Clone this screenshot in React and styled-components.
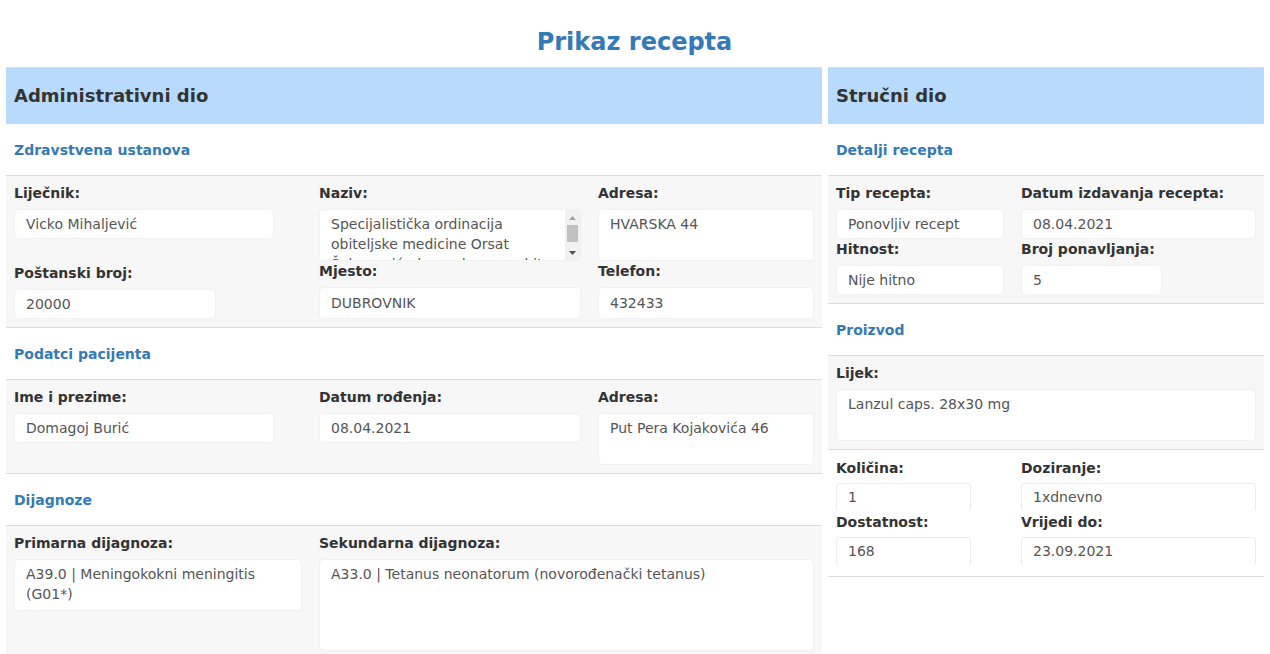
import React from "react";
import styled, { createGlobalStyle } from "styled-components";

const GlobalStyle = createGlobalStyle`
  html, body { margin: 0; padding: 0; background: #fff; }
  body { font-family: "DejaVu Sans", Verdana, sans-serif; color: #333; }
  * { box-sizing: border-box; }
`;

const Page = styled.div`
  padding: 0 7px 0 6px;
`;

const Title = styled.h1`
  margin: 0;
  padding: 27px 0 10px;
  line-height: 30px;
  font-size: 24px;
  font-weight: bold;
  color: #337ab7;
  text-align: center;
`;

const Columns = styled.div`
  display: grid;
  grid-template-columns: 816px 436px;
  column-gap: 6px;
  align-items: start;
`;

const Panel = styled.section`
  display: flex;
  flex-direction: column;
`;

const PanelHeader = styled.h2`
  margin: 0;
  height: 57px;
  display: flex;
  align-items: center;
  padding: 0 8px 1px;
  background: #b8dafd;
  border-top: 1px solid #c8e2fc;
  font-size: 18px;
  font-weight: bold;
  color: #333;
`;

const SectionTitle = styled.h3`
  margin: 0;
  height: 52px;
  display: flex;
  align-items: center;
  padding: 1px 8px 0;
  border-bottom: 1px solid #dddddd;
  font-size: 14px;
  font-weight: bold;
  color: #337ab7;
  background: #fff;
`;

const SectionBody = styled.div`
  background: ${(p) => (p.$white ? "#fff" : "#f7f7f7")};
  padding: ${(p) => p.$pad || "7px 8px 8px"};
  border-bottom: 1px solid #dddddd;
`;

const FieldGrid = styled.div`
  display: grid;
  grid-template-columns: ${(p) => p.$cols};
  column-gap: 17px;
  row-gap: 0;
  align-items: start;
`;

const Field = styled.div`
  display: flex;
  flex-direction: column;
  grid-column: ${(p) => p.$span || "auto"};
  margin-top: ${(p) => p.$top || 0}px;
`;

const Label = styled.label`
  font-size: 14px;
  font-weight: bold;
  line-height: 20px;
  color: #333;
  margin-bottom: ${(p) => p.$gap || 6}px;
`;

const Box = styled.div`
  width: ${(p) => (p.$w ? `${p.$w}px` : "100%")};
  height: ${(p) => p.$h || 30}px;
  background: #fff;
  border: 1px solid ${(p) => (p.$open ? "#ececec" : "#f1f1f1")};
  border-bottom: ${(p) => (p.$open ? "0" : "1px solid #f1f1f1")};
  border-radius: 4px;
  padding: ${(p) => (p.$multi ? "4px 11px" : "0 11px")};
  font-size: 14px;
  line-height: ${(p) => (p.$multi ? "20px" : `${(p.$h || 30) - 2}px`)};
  color: #555;
  overflow: hidden;
`;

const ScrollBox = styled.div`
  display: flex;
  height: 52px;
  background: #fff;
  border: 1px solid #f1f1f1;
  border-radius: 4px;
  overflow: hidden;
`;

const ScrollText = styled.div`
  flex: 1;
  padding: 4px 11px;
  font-size: 14px;
  line-height: 20px;
  color: #555;
  overflow: hidden;
`;

const ScrollBar = styled.div`
  width: 15px;
  display: flex;
  flex-direction: column;
  background: #f1f1f1;
`;

const ScrollButton = styled.div`
  height: 15px;
  display: flex;
  align-items: center;
  justify-content: center;
`;

const ScrollTrack = styled.div`
  flex: 1;
  padding: 0 2px;
`;

const ScrollThumb = styled.div`
  height: 17px;
  background: #c1c1c1;
`;

const Arrow = ({ down, color }) => (
  <svg width="7" height="4" viewBox="0 0 7 4">
    {down ? (
      <polygon points="0,0 7,0 3.5,4" fill={color} />
    ) : (
      <polygon points="0,4 7,4 3.5,0" fill={color} />
    )}
  </svg>
);

const F = ({ label, children, span, gap, top }) => (
  <Field $span={span} $top={top}>
    <Label $gap={gap}>{label}</Label>
    {children}
  </Field>
);

export default function App() {
  return (
    <>
      <GlobalStyle />
      <Page>
        <Title>Prikaz recepta</Title>
        <Columns>
          <Panel>
            <PanelHeader>Administrativni dio</PanelHeader>
            <SectionTitle>Zdravstvena ustanova</SectionTitle>
            <SectionBody>
              <FieldGrid $cols="288px 262px 1fr">
                <F label="Liječnik:">
                  <Box $w={260}>Vicko Mihaljević</Box>
                </F>
                <F label="Naziv:">
                  <ScrollBox>
                    <ScrollText>
                      Specijalistička ordinacija obiteljske medicine Orsat
                      Šabanović, dr. med. spec. obit. med.
                    </ScrollText>
                    <ScrollBar>
                      <ScrollButton>
                        <Arrow color="#a3a3a3" />
                      </ScrollButton>
                      <ScrollTrack>
                        <ScrollThumb />
                      </ScrollTrack>
                      <ScrollButton>
                        <Arrow down color="#505050" />
                      </ScrollButton>
                    </ScrollBar>
                  </ScrollBox>
                </F>
                <F label="Adresa:">
                  <Box $h={52} $multi>HVARSKA 44</Box>
                </F>
                <F label="Poštanski broj:" top={2}>
                  <Box $w={202}>20000</Box>
                </F>
                <F label="Mjesto:">
                  <Box $h={32}>DUBROVNIK</Box>
                </F>
                <F label="Telefon:">
                  <Box $h={32}>432433</Box>
                </F>
              </FieldGrid>
            </SectionBody>
            <SectionTitle>Podatci pacijenta</SectionTitle>
            <SectionBody>
              <FieldGrid $cols="288px 262px 1fr">
                <F label="Ime i prezime:">
                  <Box $w={260}>Domagoj Burić</Box>
                </F>
                <F label="Datum rođenja:">
                  <Box>08.04.2021</Box>
                </F>
                <F label="Adresa:">
                  <Box $h={52} $multi>Put Pera Kojakovića 46</Box>
                </F>
              </FieldGrid>
            </SectionBody>
            <SectionTitle>Dijagnoze</SectionTitle>
            <SectionBody>
              <FieldGrid $cols="288px 262px 1fr">
                <F label="Primarna dijagnoza:">
                  <Box $h={52} $multi>A39.0 | Meningokokni meningitis (G01*)</Box>
                </F>
                <F label="Sekundarna dijagnoza:" span="2 / 4">
                  <Box $h={92} $multi>A33.0 | Tetanus neonatorum (novorođenački tetanus)</Box>
                </F>
              </FieldGrid>
            </SectionBody>
          </Panel>

          <Panel>
            <PanelHeader>Stručni dio</PanelHeader>
            <SectionTitle>Detalji recepta</SectionTitle>
            <SectionBody>
              <FieldGrid $cols="168px 1fr">
                <F label="Tip recepta:">
                  <Box>Ponovljiv recept</Box>
                </F>
                <F label="Datum izdavanja recepta:">
                  <Box>08.04.2021</Box>
                </F>
                <F label="Hitnost:">
                  <Box>Nije hitno</Box>
                </F>
                <F label="Broj ponavljanja:">
                  <Box $w={141}>5</Box>
                </F>
              </FieldGrid>
            </SectionBody>
            <SectionTitle>Proizvod</SectionTitle>
            <SectionBody>
              <FieldGrid $cols="1fr">
                <F label="Lijek:">
                  <Box $h={52} $multi>Lanzul caps. 28x30 mg</Box>
                </F>
              </FieldGrid>
            </SectionBody>
            <SectionBody $white $pad="8px 8px 10px">
              <FieldGrid $cols="168px 1fr">
                <F label="Količina:" gap={5}>
                  <Box $w={135} $h={29} $open>1</Box>
                </F>
                <F label="Doziranje:" gap={5}>
                  <Box $h={29} $open>1xdnevno</Box>
                </F>
                <F label="Dostatnost:" gap={5}>
                  <Box $w={135} $h={29} $open>168</Box>
                </F>
                <F label="Vrijedi do:" gap={5}>
                  <Box $h={29} $open>23.09.2021</Box>
                </F>
              </FieldGrid>
            </SectionBody>
          </Panel>
        </Columns>
      </Page>
    </>
  );
}
